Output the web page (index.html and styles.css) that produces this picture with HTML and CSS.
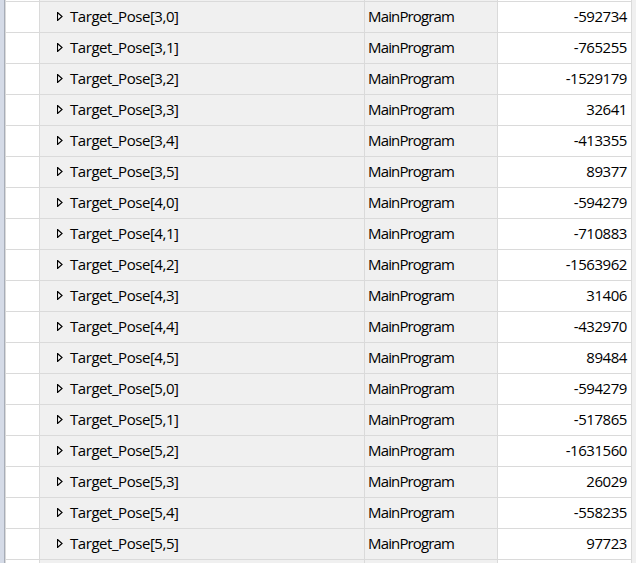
FILE: index.html
```html
<!DOCTYPE html>
<html>
<head>
<meta charset="utf-8">
<link rel="stylesheet" href="styles.css">
</head>
<body>
<div class="view">
  <div class="strip"></div>
  <div class="grid">
    <div class="row stub"><div class="c c1"></div><div class="c c2"></div><div class="c c3"></div><div class="c c4"></div></div>
    <div class="row"><div class="c c1"></div><div class="c c2"><svg class="tri" width="6" height="9" viewBox="0 0 6 9"><polygon points="0.5,0.5 5,4.5 0.5,8.5" /></svg><span>Target_Pose[3,0]</span></div><div class="c c3">MainProgram</div><div class="c c4">-592734</div></div>
    <div class="row"><div class="c c1"></div><div class="c c2"><svg class="tri" width="6" height="9" viewBox="0 0 6 9"><polygon points="0.5,0.5 5,4.5 0.5,8.5" /></svg><span>Target_Pose[3,1]</span></div><div class="c c3">MainProgram</div><div class="c c4">-765255</div></div>
    <div class="row"><div class="c c1"></div><div class="c c2"><svg class="tri" width="6" height="9" viewBox="0 0 6 9"><polygon points="0.5,0.5 5,4.5 0.5,8.5" /></svg><span>Target_Pose[3,2]</span></div><div class="c c3">MainProgram</div><div class="c c4">-1529179</div></div>
    <div class="row"><div class="c c1"></div><div class="c c2"><svg class="tri" width="6" height="9" viewBox="0 0 6 9"><polygon points="0.5,0.5 5,4.5 0.5,8.5" /></svg><span>Target_Pose[3,3]</span></div><div class="c c3">MainProgram</div><div class="c c4">32641</div></div>
    <div class="row"><div class="c c1"></div><div class="c c2"><svg class="tri" width="6" height="9" viewBox="0 0 6 9"><polygon points="0.5,0.5 5,4.5 0.5,8.5" /></svg><span>Target_Pose[3,4]</span></div><div class="c c3">MainProgram</div><div class="c c4">-413355</div></div>
    <div class="row"><div class="c c1"></div><div class="c c2"><svg class="tri" width="6" height="9" viewBox="0 0 6 9"><polygon points="0.5,0.5 5,4.5 0.5,8.5" /></svg><span>Target_Pose[3,5]</span></div><div class="c c3">MainProgram</div><div class="c c4">89377</div></div>
    <div class="row"><div class="c c1"></div><div class="c c2"><svg class="tri" width="6" height="9" viewBox="0 0 6 9"><polygon points="0.5,0.5 5,4.5 0.5,8.5" /></svg><span>Target_Pose[4,0]</span></div><div class="c c3">MainProgram</div><div class="c c4">-594279</div></div>
    <div class="row"><div class="c c1"></div><div class="c c2"><svg class="tri" width="6" height="9" viewBox="0 0 6 9"><polygon points="0.5,0.5 5,4.5 0.5,8.5" /></svg><span>Target_Pose[4,1]</span></div><div class="c c3">MainProgram</div><div class="c c4">-710883</div></div>
    <div class="row"><div class="c c1"></div><div class="c c2"><svg class="tri" width="6" height="9" viewBox="0 0 6 9"><polygon points="0.5,0.5 5,4.5 0.5,8.5" /></svg><span>Target_Pose[4,2]</span></div><div class="c c3">MainProgram</div><div class="c c4">-1563962</div></div>
    <div class="row"><div class="c c1"></div><div class="c c2"><svg class="tri" width="6" height="9" viewBox="0 0 6 9"><polygon points="0.5,0.5 5,4.5 0.5,8.5" /></svg><span>Target_Pose[4,3]</span></div><div class="c c3">MainProgram</div><div class="c c4">31406</div></div>
    <div class="row"><div class="c c1"></div><div class="c c2"><svg class="tri" width="6" height="9" viewBox="0 0 6 9"><polygon points="0.5,0.5 5,4.5 0.5,8.5" /></svg><span>Target_Pose[4,4]</span></div><div class="c c3">MainProgram</div><div class="c c4">-432970</div></div>
    <div class="row"><div class="c c1"></div><div class="c c2"><svg class="tri" width="6" height="9" viewBox="0 0 6 9"><polygon points="0.5,0.5 5,4.5 0.5,8.5" /></svg><span>Target_Pose[4,5]</span></div><div class="c c3">MainProgram</div><div class="c c4">89484</div></div>
    <div class="row"><div class="c c1"></div><div class="c c2"><svg class="tri" width="6" height="9" viewBox="0 0 6 9"><polygon points="0.5,0.5 5,4.5 0.5,8.5" /></svg><span>Target_Pose[5,0]</span></div><div class="c c3">MainProgram</div><div class="c c4">-594279</div></div>
    <div class="row"><div class="c c1"></div><div class="c c2"><svg class="tri" width="6" height="9" viewBox="0 0 6 9"><polygon points="0.5,0.5 5,4.5 0.5,8.5" /></svg><span>Target_Pose[5,1]</span></div><div class="c c3">MainProgram</div><div class="c c4">-517865</div></div>
    <div class="row"><div class="c c1"></div><div class="c c2"><svg class="tri" width="6" height="9" viewBox="0 0 6 9"><polygon points="0.5,0.5 5,4.5 0.5,8.5" /></svg><span>Target_Pose[5,2]</span></div><div class="c c3">MainProgram</div><div class="c c4">-1631560</div></div>
    <div class="row"><div class="c c1"></div><div class="c c2"><svg class="tri" width="6" height="9" viewBox="0 0 6 9"><polygon points="0.5,0.5 5,4.5 0.5,8.5" /></svg><span>Target_Pose[5,3]</span></div><div class="c c3">MainProgram</div><div class="c c4">26029</div></div>
    <div class="row"><div class="c c1"></div><div class="c c2"><svg class="tri" width="6" height="9" viewBox="0 0 6 9"><polygon points="0.5,0.5 5,4.5 0.5,8.5" /></svg><span>Target_Pose[5,4]</span></div><div class="c c3">MainProgram</div><div class="c c4">-558235</div></div>
    <div class="row"><div class="c c1"></div><div class="c c2"><svg class="tri" width="6" height="9" viewBox="0 0 6 9"><polygon points="0.5,0.5 5,4.5 0.5,8.5" /></svg><span>Target_Pose[5,5]</span></div><div class="c c3">MainProgram</div><div class="c c4">97723</div></div>
    <div class="row"><div class="c c1"></div><div class="c c2"></div><div class="c c3"></div><div class="c c4"></div></div>
  </div>
  <div class="rpad"></div>
</div>
</body>
</html>
```
FILE: styles.css
```css
html, body {
  margin: 0;
  padding: 0;
  background: #f0f0f0;
}
.view {
  display: flex;
  width: 636px;
  height: 563px;
  overflow: hidden;
  font-family: "Segoe UI", "Open Sans", "Noto Sans", sans-serif;
  font-size: 15px;
  letter-spacing: -0.45px;
  color: #000;
}
.strip {
  width: 4px;
  flex: none;
  background: #d5dbe7;
  border-right: 1px solid #a7adb8;
}
.grid {
  flex: none;
  display: flex;
  flex-direction: column;
  border-left: 1px solid #dadada;
  border-right: 1px solid #dadada;
}
.row {
  display: grid;
  grid-template-columns: 34px 325px 133px 133px;
  height: 31px;
  box-sizing: border-box;
  border-bottom: 1px solid #dadada;
  flex: none;
}
.row.stub {
  height: 2px;
}
.c {
  box-sizing: border-box;
  border-right: 1px solid #dadada;
  display: flex;
  align-items: center;
  padding-bottom: 2px;
  white-space: nowrap;
  overflow: hidden;
}
.row.stub .c {
  padding-bottom: 0;
}
.c4 {
  border-right: none;
  background: #fff;
  justify-content: flex-end;
  padding-right: 4px;
}
.c1 {
  background: #fff;
}
.c2 {
  background: #f0f0f0;
  padding-left: 17px;
}
.c3 {
  background: #f0f0f0;
  padding-left: 3px;
  letter-spacing: -0.85px;
}
.tri {
  flex: none;
  margin-right: 7px;
  margin-top: 1px;
  fill: #fff;
  stroke: #000;
  stroke-width: 1.2;
}
.rpad {
  flex: 1;
  background: #f0f0f0;
}
```
